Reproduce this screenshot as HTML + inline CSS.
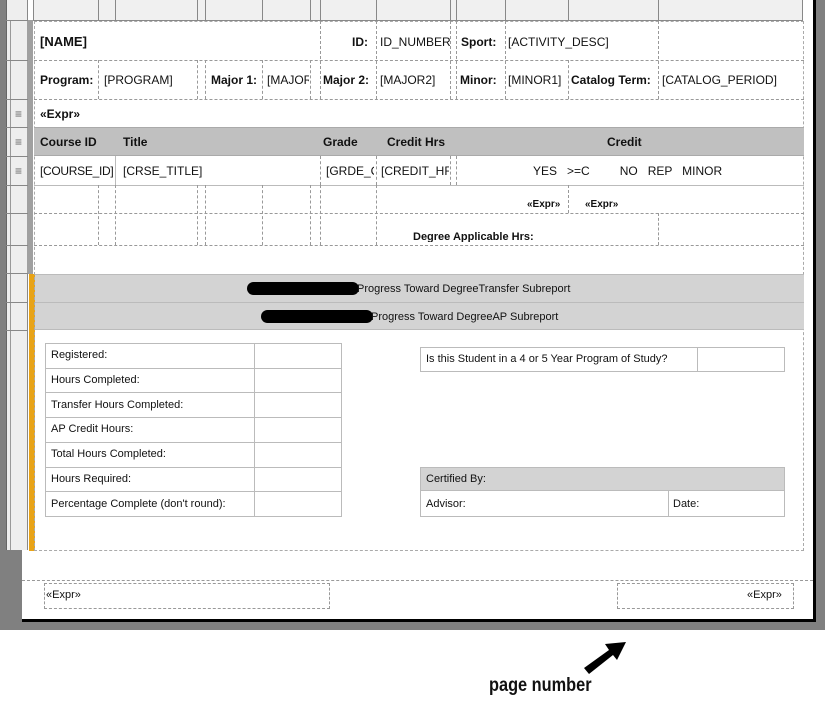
<!DOCTYPE html>
<html><head><meta charset="utf-8"><style>
*{margin:0;padding:0;box-sizing:border-box}
body{width:825px;height:703px;background:#fff;position:relative;overflow:hidden;font-family:"Liberation Sans",sans-serif;font-size:12px;color:#111}
div{position:absolute}
.t{white-space:nowrap;line-height:14px}
.b{font-weight:bold}
.dv{border-left:1px dashed #999;width:0}
.dh{border-top:1px dashed #999;height:0}
.sv{border-left:1px solid #bbb;width:0}
.sh{border-top:1px solid #bbb;height:0}
.rl{border-top:1px solid #888;height:0;left:6px;width:22px}
</style></head><body>
<div style="left:0;top:0;width:825px;height:630px;background:#808080"></div>
<div style="left:22px;top:0;width:794px;height:622px;background:#000"></div>
<div style="left:22px;top:0;width:791px;height:619px;background:#fff"></div>
<div style="left:6px;top:0;width:22px;height:550px;background:#eeeeee;border-left:1px solid #666;border-right:1px solid #888"></div>
<div style="left:10px;top:20px;width:0;height:530px;border-left:1px solid #999"></div>
<div style="left:27px;top:20px;width:6px;height:254px;background:#a0a0a0"></div>
<div style="left:29px;top:274px;width:6px;height:277px;background:#e8a317"></div>
<div class="rl" style="top:20px"></div><div class="rl" style="top:60px"></div><div class="rl" style="top:99px"></div><div class="rl" style="top:127px"></div><div class="rl" style="top:156px"></div><div class="rl" style="top:185px"></div><div class="rl" style="top:213px"></div><div class="rl" style="top:245px"></div><div class="rl" style="top:273px"></div><div class="rl" style="top:302px"></div><div class="rl" style="top:330px"></div>
<div class="t" style="left:15px;top:107px;color:#666">≡</div><div class="t" style="left:15px;top:135px;color:#666">≡</div><div class="t" style="left:15px;top:164px;color:#666">≡</div>
<div style="left:33px;top:0;width:770px;height:21px;background:#f0f0f0;border-bottom:1px solid #888;border-right:1px solid #888"></div>
<div style="left:33px;top:0;width:0;height:21px;border-left:1px solid #888"></div>
<div style="left:98px;top:0;width:0;height:21px;border-left:1px solid #888"></div><div style="left:115px;top:0;width:0;height:21px;border-left:1px solid #888"></div><div style="left:197px;top:0;width:0;height:21px;border-left:1px solid #888"></div><div style="left:205px;top:0;width:0;height:21px;border-left:1px solid #888"></div><div style="left:262px;top:0;width:0;height:21px;border-left:1px solid #888"></div><div style="left:310px;top:0;width:0;height:21px;border-left:1px solid #888"></div><div style="left:320px;top:0;width:0;height:21px;border-left:1px solid #888"></div><div style="left:376px;top:0;width:0;height:21px;border-left:1px solid #888"></div><div style="left:450px;top:0;width:0;height:21px;border-left:1px solid #888"></div><div style="left:456px;top:0;width:0;height:21px;border-left:1px solid #888"></div><div style="left:505px;top:0;width:0;height:21px;border-left:1px solid #888"></div><div style="left:568px;top:0;width:0;height:21px;border-left:1px solid #888"></div><div style="left:658px;top:0;width:0;height:21px;border-left:1px solid #888"></div>
<div style="left:34px;top:21px;width:770px;height:530px;border:1px dashed #aaa"></div>
<div class="dh" style="left:34px;top:60px;width:770px"></div>
<div class="dh" style="left:34px;top:99px;width:770px"></div>
<div class="sh" style="left:34px;top:185px;width:770px"></div>
<div class="dh" style="left:34px;top:213px;width:770px"></div>
<div class="dh" style="left:34px;top:245px;width:770px"></div>
<div class="dv" style="left:320px;top:21px;height:78px"></div><div class="dv" style="left:376px;top:21px;height:78px"></div><div class="dv" style="left:450px;top:21px;height:78px"></div><div class="dv" style="left:456px;top:21px;height:78px"></div><div class="dv" style="left:505px;top:21px;height:78px"></div><div class="dv" style="left:658px;top:21px;height:78px"></div>
<div class="dv" style="left:98px;top:60px;height:39px"></div><div class="dv" style="left:197px;top:60px;height:39px"></div><div class="dv" style="left:205px;top:60px;height:39px"></div><div class="dv" style="left:262px;top:60px;height:39px"></div><div class="dv" style="left:310px;top:60px;height:39px"></div><div class="dv" style="left:568px;top:60px;height:39px"></div>
<div class="t b" style="left:40px;top:35px;font-size:13px">[NAME]</div>
<div class="t b" style="left:352px;top:35px">ID:</div>
<div class="t" style="left:380px;top:35px">ID_NUMBER</div>
<div class="t b" style="left:461px;top:35px">Sport:</div>
<div class="t" style="left:508px;top:35px">[ACTIVITY_DESC]</div>
<div class="t b" style="left:40px;top:73px">Program:</div>
<div class="t" style="left:104px;top:73px">[PROGRAM]</div>
<div class="t b" style="left:211px;top:73px">Major 1:</div>
<div class="t" style="left:267px;top:73px;width:42px;overflow:hidden">[MAJOR1]</div>
<div class="t b" style="left:323px;top:73px">Major 2:</div>
<div class="t" style="left:380px;top:73px">[MAJOR2]</div>
<div class="t b" style="left:460px;top:73px">Minor:</div>
<div class="t" style="left:508px;top:73px">[MINOR1]</div>
<div class="t b" style="left:571px;top:73px">Catalog Term:</div>
<div class="t" style="left:662px;top:73px">[CATALOG_PERIOD]</div>
<div class="t b" style="left:40px;top:107px">«Expr»</div>
<div style="left:34px;top:127px;width:770px;height:29px;background:#c0c0c0;border-top:1px solid #aaa;border-bottom:1px solid #aaa"></div>
<div class="t b" style="left:40px;top:135px">Course ID</div>
<div class="t b" style="left:123px;top:135px">Title</div>
<div class="t b" style="left:323px;top:135px">Grade</div>
<div class="t b" style="left:387px;top:135px">Credit Hrs</div>
<div class="t b" style="left:607px;top:135px">Credit</div>
<div class="sv" style="left:115px;top:156px;height:29px"></div><div class="dv" style="left:320px;top:156px;height:29px"></div><div class="dv" style="left:376px;top:156px;height:29px"></div><div class="dv" style="left:450px;top:156px;height:29px"></div><div class="dv" style="left:456px;top:156px;height:29px"></div>
<div class="t" style="left:40px;top:164px;letter-spacing:-0.3px">[COURSE_ID]</div>
<div class="t" style="left:123px;top:164px">[CRSE_TITLE]</div>
<div class="t" style="left:326px;top:164px;width:48px;overflow:hidden">[GRDE_CODE]</div>
<div class="t" style="left:381px;top:164px;width:68px;overflow:hidden">[CREDIT_HRS]</div>
<div class="t" style="left:533px;top:164px">YES &nbsp;&nbsp;&gt;=C &nbsp;&nbsp;&nbsp;&nbsp;&nbsp;&nbsp;&nbsp;&nbsp;NO &nbsp;&nbsp;REP &nbsp;&nbsp;MINOR</div>
<div class="dv" style="left:98px;top:185px;height:60px"></div><div class="dv" style="left:115px;top:185px;height:60px"></div><div class="dv" style="left:197px;top:185px;height:60px"></div><div class="dv" style="left:205px;top:185px;height:60px"></div><div class="dv" style="left:262px;top:185px;height:60px"></div><div class="dv" style="left:310px;top:185px;height:60px"></div><div class="dv" style="left:320px;top:185px;height:60px"></div><div class="dv" style="left:376px;top:185px;height:60px"></div><div class="dv" style="left:568px;top:185px;height:28px"></div><div class="dv" style="left:658px;top:213px;height:32px"></div>
<div class="t b" style="left:527px;top:198px;font-size:10px">«Expr»</div>
<div class="t b" style="left:585px;top:198px;font-size:10px">«Expr»</div>
<div class="t b" style="left:413px;top:230px;font-size:11px;height:12px;overflow:hidden">Degree Applicable Hrs:</div>
<div style="left:35px;top:274px;width:769px;height:56px;background:#d3d3d3;border-top:1px solid #bbb;border-bottom:1px solid #bbb"></div>
<div class="sh" style="left:35px;top:302px;width:769px"></div>
<div style="left:247px;top:282px;width:112px;height:13px;background:#000;border-radius:7px"></div>
<div class="t" style="left:357px;top:282px;font-size:11px">Progress Toward DegreeTransfer Subreport</div>
<div style="left:261px;top:310px;width:112px;height:13px;background:#000;border-radius:7px"></div>
<div class="t" style="left:371px;top:310px;font-size:11px">Progress Toward DegreeAP Subreport</div>
<div style="left:45px;top:343px;width:297px;height:174px;border:1px solid #bbb"></div>
<div class="sv" style="left:254px;top:343px;height:174px"></div>
<div class="sh" style="left:45px;top:368px;width:297px"></div><div class="sh" style="left:45px;top:392px;width:297px"></div><div class="sh" style="left:45px;top:417px;width:297px"></div><div class="sh" style="left:45px;top:442px;width:297px"></div><div class="sh" style="left:45px;top:467px;width:297px"></div><div class="sh" style="left:45px;top:491px;width:297px"></div>
<div class="t" style="left:51px;top:348px;font-size:11px">Registered:</div>
<div class="t" style="left:51px;top:373px;font-size:11px">Hours Completed:</div>
<div class="t" style="left:51px;top:398px;font-size:11px">Transfer Hours Completed:</div>
<div class="t" style="left:51px;top:422px;font-size:11px">AP Credit Hours:</div>
<div class="t" style="left:51px;top:447px;font-size:11px">Total Hours Completed:</div>
<div class="t" style="left:51px;top:472px;font-size:11px">Hours Required:</div>
<div class="t" style="left:51px;top:497px;font-size:11px">Percentage Complete (don't round):</div>
<div style="left:420px;top:347px;width:365px;height:25px;border:1px solid #bbb"></div>
<div class="sv" style="left:697px;top:347px;height:25px"></div>
<div class="t" style="left:426px;top:352px;font-size:11px">Is this Student in a 4 or 5 Year Program of Study?</div>
<div style="left:420px;top:467px;width:365px;height:50px;border:1px solid #bbb"></div>
<div style="left:421px;top:468px;width:363px;height:23px;background:#d3d3d3;border-bottom:1px solid #bbb"></div>
<div class="sv" style="left:668px;top:491px;height:25px"></div>
<div class="t" style="left:426px;top:472px;font-size:11px">Certified By:</div>
<div class="t" style="left:426px;top:497px;font-size:11px">Advisor:</div>
<div class="t" style="left:673px;top:497px;font-size:11px">Date:</div>
<div class="dh" style="left:22px;top:580px;width:791px"></div>
<div style="left:44px;top:583px;width:286px;height:26px;border:1px dashed #999"></div>
<div class="t" style="left:46px;top:588px;font-size:11px">«Expr»</div>
<div style="left:617px;top:583px;width:177px;height:26px;border:1px dashed #999"></div>
<div class="t" style="left:747px;top:588px;font-size:11px">«Expr»</div>
<svg style="position:absolute;left:575px;top:638px" width="60" height="40"><path d="M9 30 L34 12 L30 6 L51 4 L42 22 L38 17 L14 36 Z" fill="#000"/></svg>
<div class="t b" style="left:489px;top:676px;font-size:19px;line-height:20px;transform:scaleX(.86);transform-origin:left">page number</div>
</body></html>
